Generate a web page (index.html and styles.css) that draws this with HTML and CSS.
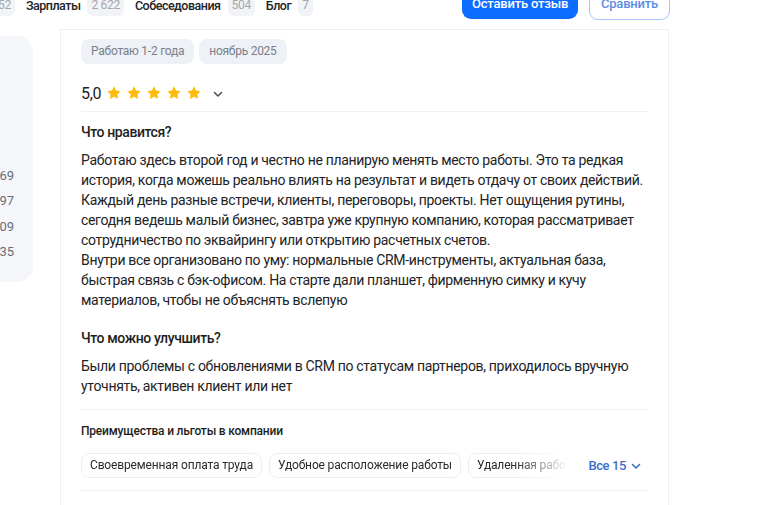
FILE: index.html
```html
<!DOCTYPE html>
<html lang="ru">
<head>
<meta charset="utf-8">
<title>Отзыв</title>
<link rel="stylesheet" href="styles.css">
</head>
<body>
<div class="page">
  <header class="header">
    <nav class="nav">
      <span class="badge first">52</span>
      <a class="nav-link">Зарплаты</a><span class="badge">2 622</span>
      <a class="nav-link">Собеседования</a><span class="badge">504</span>
      <a class="nav-link">Блог</a><span class="badge">7</span>
    </nav>
    <div class="actions">
      <button class="btn btn-primary">Оставить отзыв</button>
      <button class="btn btn-outline">Сравнить</button>
    </div>
  </header>
  <div class="main">
    <aside class="sidebar">
      <div class="side-nums">
        <span>69</span><span>97</span><span>09</span><span>35</span>
      </div>
    </aside>
    <article class="card">
      <div class="tags">
        <span class="tag">Работаю 1-2 года</span>
        <span class="tag">ноябрь 2025</span>
      </div>
      <div class="rating">
        <span class="score">5,0</span>
        <span class="stars">
          <svg class="star" viewBox="0 0 24 24"><path d="M12 2l3.09 6.26L22 9.27l-5 4.87 1.18 6.88L12 17.77l-6.18 3.25L7 14.14 2 9.27l6.91-1.01L12 2z"/></svg>
          <svg class="star" viewBox="0 0 24 24"><path d="M12 2l3.09 6.26L22 9.27l-5 4.87 1.18 6.88L12 17.77l-6.18 3.25L7 14.14 2 9.27l6.91-1.01L12 2z"/></svg>
          <svg class="star" viewBox="0 0 24 24"><path d="M12 2l3.09 6.26L22 9.27l-5 4.87 1.18 6.88L12 17.77l-6.18 3.25L7 14.14 2 9.27l6.91-1.01L12 2z"/></svg>
          <svg class="star" viewBox="0 0 24 24"><path d="M12 2l3.09 6.26L22 9.27l-5 4.87 1.18 6.88L12 17.77l-6.18 3.25L7 14.14 2 9.27l6.91-1.01L12 2z"/></svg>
          <svg class="star" viewBox="0 0 24 24"><path d="M12 2l3.09 6.26L22 9.27l-5 4.87 1.18 6.88L12 17.77l-6.18 3.25L7 14.14 2 9.27l6.91-1.01L12 2z"/></svg>
        </span>
        <svg class="chev" viewBox="0 0 12 12"><path d="M2.5 4.5L6 8l3.5-3.5" fill="none" stroke="#4a4d55" stroke-width="1.5" stroke-linecap="round" stroke-linejoin="round"/></svg>
      </div>
      <section class="block">
        <h3 class="block-title">Что нравится?</h3>
        <p class="text">Работаю здесь второй год и честно не планирую менять место работы. Это та редкая<br>история, когда можешь реально влиять на результат и видеть отдачу от своих действий.<br>Каждый день разные встречи, клиенты, переговоры, проекты. Нет ощущения рутины,<br>сегодня ведешь малый бизнес, завтра уже крупную компанию, которая рассматривает<br>сотрудничество по эквайрингу или открытию расчетных счетов.<br>Внутри все организовано по уму: нормальные CRM-инструменты, актуальная база,<br>быстрая связь с бэк-офисом. На старте дали планшет, фирменную симку и кучу<br>материалов, чтобы не объяснять вслепую</p>
        <h3 class="block-title second">Что можно улучшить?</h3>
        <p class="text">Были проблемы с обновлениями в CRM по статусам партнеров, приходилось вручную<br>уточнять, активен клиент или нет</p>
      </section>
      <section class="benefits">
        <h4 class="benefits-title">Преимущества и льготы в компании</h4>
        <div class="benefits-row">
          <div class="chips">
            <span class="chip">Своевременная оплата труда</span>
            <span class="chip">Удобное расположение работы</span>
            <span class="chip">Удаленная работа</span>
          </div>
          <a class="more">Все 15
            <svg class="more-chev" viewBox="0 0 12 12"><path d="M2.5 4.5L6 8l3.5-3.5" fill="none" stroke="#3d6fc8" stroke-width="1.6" stroke-linecap="round" stroke-linejoin="round"/></svg>
          </a>
        </div>
      </section>
    </article>
  </div>
</div>
</body>
</html>
```

FILE: styles.css
```css
* { box-sizing: border-box; }
html, body { margin: 0; padding: 0; background: #fff; }
body {
  font-family: Roboto, "Noto Sans", "Liberation Sans", sans-serif;
  color: #222326;
  width: 768px;
  height: 505px;
  overflow: hidden;
}
.page { width: 768px; }

.header {
  display: flex;
  align-items: flex-start;
  height: 29px;
}
.nav {
  display: flex;
  align-items: center;
  margin-top: -6px;
  font-size: 12.5px;
  white-space: nowrap;
}
.nav-link {
  font-weight: 500;
  color: #222326;
  letter-spacing: -0.5px;
  margin-left: 11px;
  margin-right: 7px;
}
.badge {
  height: 22px;
  line-height: 22px;
  padding: 0 4px;
  background: #f1f3f7;
  color: #a2a7b0;
  border-radius: 6px;
  font-size: 12px;
  letter-spacing: -0.3px;
}
.badge.first { margin-left: -6px; }

.actions {
  margin-left: auto;
  margin-right: 98px;
  margin-top: -13px;
  display: flex;
  align-items: flex-start;
  gap: 11px;
}
.btn {
  height: 32px;
  border-radius: 9px;
  font-family: inherit;
  font-size: 13px;
  font-weight: 500;
  letter-spacing: -0.2px;
  padding: 0;
  white-space: nowrap;
}
.btn-primary {
  background: #0b6cff;
  color: #fff;
  border: 0;
  width: 116px;
}
.btn-outline {
  background: #fff;
  color: #5b8de6;
  border: 1.5px solid #a3c4ff;
  width: 81px;
  height: 33px;
}

.main {
  display: flex;
  gap: 27px;
  align-items: flex-start;
}
.sidebar {
  width: 73px;
  margin-left: -40px;
  margin-top: 7px;
  height: 246px;
  background: #f5f6fa;
  border-radius: 0 16px 16px 0;
}
.side-nums {
  display: flex;
  flex-direction: column;
  align-items: flex-end;
  padding-top: 127px;
  padding-right: 19px;
  font-size: 13px;
  color: #6a6e76;
  line-height: 25.3px;
}

.card {
  width: 609px;
  border-top: 1px solid #eeeff2;
  border-left: 1px solid #eeeff2;
  border-right: 1px solid #eeeff2;
  padding: 9px 20px 0 20px;
  min-height: 480px;
}
.tags { display: flex; gap: 5px; }
.tag {
  height: 25px;
  line-height: 25px;
  padding: 0 10px;
  background: #eef1f6;
  color: #7a7f89;
  font-size: 12px;
  letter-spacing: -0.25px;
  border-radius: 8px;
  white-space: nowrap;
}
.rating {
  display: flex;
  align-items: center;
  height: 24px;
  margin-top: 17px;
}
.score { font-size: 16px; color: #1d1e21; margin-right: 5px; letter-spacing: -0.3px; }
.stars { display: flex; gap: 4px; }
.star { width: 16px; height: 16px; fill: #fcbc0d; }
.chev { width: 12px; height: 12px; margin-left: 10px; margin-top: 1px; }

.block {
  border-top: 1px solid #eff0f3;
  margin-top: 6px;
  padding-top: 10px;
  padding-bottom: 13px;
}
.block-title {
  margin: 0;
  font-size: 14px;
  line-height: 20px;
  font-weight: 500;
  letter-spacing: -0.4px;
  color: #1d1e21;
}
.block-title.second { margin-top: 18px; }
.text {
  margin: 8px 0 0 0;
  font-size: 14px;
  line-height: 20px;
  letter-spacing: -0.32px;
  white-space: nowrap;
  color: #222326;
}

.benefits {
  border-top: 1px solid #eff0f3;
  border-bottom: 1px solid #eff0f3;
  padding-top: 13px;
  padding-bottom: 12px;
}
.benefits-title {
  margin: 0;
  font-size: 12px;
  line-height: 16px;
  font-weight: 500;
  letter-spacing: -0.2px;
  color: #1d1e21;
}
.benefits-row {
  display: flex;
  align-items: center;
  margin-top: 14px;
}
.chips {
  display: flex;
  gap: 7px;
  width: 487px;
  overflow: hidden;
  -webkit-mask-image: linear-gradient(to right, #000 435px, transparent 487px);
  mask-image: linear-gradient(to right, #000 435px, transparent 487px);
}
.chip {
  flex: none;
  height: 25px;
  line-height: 23px;
  padding: 0 8px;
  border: 1px solid #eceef2;
  border-radius: 8px;
  font-size: 12px;
  letter-spacing: -0.15px;
  color: #2a2b2f;
  background: #fff;
  white-space: nowrap;
}
.more {
  margin-left: auto;
  display: flex;
  align-items: center;
  gap: 4px;
  font-size: 13px;
  font-weight: 500;
  letter-spacing: -0.4px;
  color: #3d6fc8;
  margin-right: 6px;
  white-space: nowrap;
}
.more-chev { width: 12px; height: 12px; }
```
